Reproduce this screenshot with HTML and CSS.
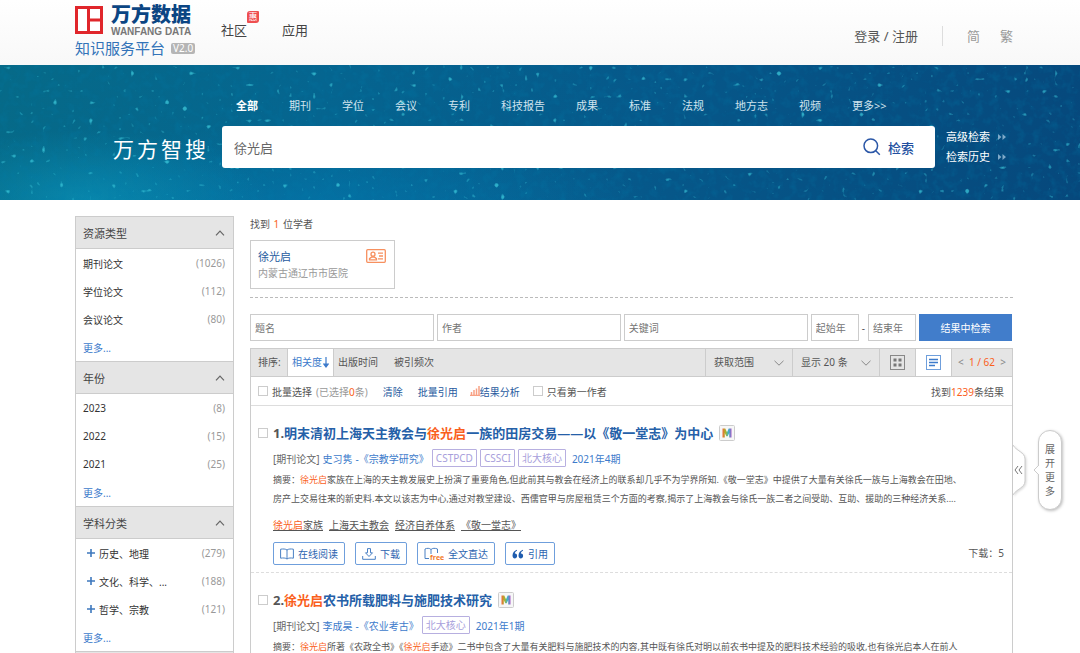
FILE: index.html
```html
<!DOCTYPE html>
<html lang="zh-CN">
<head>
<meta charset="utf-8">
<title>万方数据知识服务平台</title>
<link rel="stylesheet" href="styles.css">
</head>
<body>
<svg class="defs" aria-hidden="true">
  <defs>
    <symbol id="up" viewBox="0 0 10 6"><path d="M1 5.3 5 1.2 9 5.3" fill="none" stroke="#666" stroke-width="1.2"/></symbol>
    <symbol id="down" viewBox="0 0 10 6"><path d="M.5.8 5 5.2 9.500.8" fill="none" stroke="#888" stroke-width="1"/></symbol>
    <symbol id="ff" viewBox="0 0 8 6"><path d="M0 0 3.400 3 0 6zM4.500 0 8 3 4.500 6z" fill="#7ea9c8"/></symbol>
    <linearGradient id="rainbow" x1="0" y1="0" x2="1" y2="0"><stop offset="0" stop-color="#ef6a38"/><stop offset=".35" stop-color="#a8b62c"/><stop offset=".65" stop-color="#3bb5c9"/><stop offset="1" stop-color="#a35bc5"/></linearGradient>
    <symbol id="metrics" viewBox="0 0 16 16"><rect x=".5" y=".5" width="15" height="15" rx="1" fill="#f7f7f7" stroke="#ccc"/><path d="M3.500 12.500v-9h2.800L8 7.200l1.700-3.700h2.800v9h-2.300V8L8.700 11.200H7.300L5.800 8v4.500z" fill="url(#rainbow)"/></symbol>
  </defs>
</svg>
<div class="page">
  <header class="top">
    <a class="logo" href="#">
      <span class="logo-row">
        <svg class="logo-mark" viewBox="0 0 28 28"><path d="M1.500 1.500h25v25h-25z" fill="#fff" stroke="#e0262b" stroke-width="3"/><path d="M13.500 1.500v25M13.500 14h12" fill="none" stroke="#e0262b" stroke-width="3"/></svg>
        <span class="logo-text"><b class="logo-name">万方数据</b><span class="logo-en">WANFANG DATA</span></span>
      </span>
      <span class="logo-sub">知识服务平台<span class="version">V2.0</span></span>
    </a>
    <nav class="top-nav">
      <a href="#" class="community">社区<span class="badge">惠</span></a>
      <a href="#">应用</a>
    </nav>
    <div class="account"><a href="#">登录 / 注册</a><span class="bar"></span><a class="lang" href="#">简</a><a class="lang" href="#">繁</a></div>
  </header>

  <section class="banner">
    <svg class="specks" aria-hidden="true">
      <filter id="drops" x="0" y="0" width="100%" height="100%">
        <feTurbulence type="fractalNoise" baseFrequency="0.17" numOctaves="1" seed="8"/>
        <feColorMatrix values="0 0 0 0 0.05  0 0 0 0 0.62  0 0 0 0 0.74  9 0 0 0 -6.2"/>
        <feGaussianBlur stdDeviation="0.5"/>
      </filter>
      <filter id="grain" x="0" y="0" width="100%" height="100%">
        <feTurbulence type="fractalNoise" baseFrequency="0.12" numOctaves="3" seed="3"/>
        <feColorMatrix values="0 0 0 0 0  0 0 0 0 0.2  0 0 0 0 0.4  2 0 0 0 -0.9"/>
      </filter>
      <rect width="100%" height="100%" filter="url(#grain)" opacity=".3"/>
      <rect width="100%" height="100%" filter="url(#drops)" opacity=".7"/>
    </svg>
    <nav class="types">
      <a class="on" href="#">全部</a><a href="#">期刊</a><a href="#">学位</a><a href="#">会议</a><a href="#">专利</a><a href="#">科技报告</a><a href="#">成果</a><a href="#">标准</a><a href="#">法规</a><a href="#">地方志</a><a href="#">视频</a><a href="#">更多&gt;&gt;</a>
    </nav>
    <form class="search">
      <label class="brand" for="q">万方智搜</label>
      <div class="search-box">
        <input id="q" type="text" value="徐光启">
        <button type="button"><svg class="glass" viewBox="0 0 18 18"><circle cx="7.800" cy="7.800" r="6.800"/><path d="m12.800 12.800 4 4"/></svg>检索</button>
      </div>
      <div class="search-links">
        <a href="#">高级检索<svg class="ff"><use href="#ff"/></svg></a>
        <a href="#">检索历史<svg class="ff"><use href="#ff"/></svg></a>
      </div>
    </form>
  </section>

  <div class="body">
    <aside class="side">
      <section>
        <h2>资源类型<svg class="chev"><use href="#up"/></svg></h2>
        <ul>
          <li><a href="#">期刊论文</a><span>(1026)</span></li>
          <li><a href="#">学位论文</a><span>(112)</span></li>
          <li><a href="#">会议论文</a><span>(80)</span></li>
          <li><a class="more" href="#">更多...</a></li>
        </ul>
      </section>
      <section>
        <h2>年份<svg class="chev"><use href="#up"/></svg></h2>
        <ul>
          <li><a href="#">2023</a><span>(8)</span></li>
          <li><a href="#">2022</a><span>(15)</span></li>
          <li><a href="#">2021</a><span>(25)</span></li>
          <li><a class="more" href="#">更多...</a></li>
        </ul>
      </section>
      <section>
        <h2>学科分类<svg class="chev"><use href="#up"/></svg></h2>
        <ul>
          <li class="tree"><svg class="plus" viewBox="0 0 8 8"><path d="M4 0v8M0 4h8"/></svg><a href="#">历史、地理</a><span>(279)</span></li>
          <li class="tree"><svg class="plus" viewBox="0 0 8 8"><path d="M4 0v8M0 4h8"/></svg><a href="#">文化、科学、...</a><span>(188)</span></li>
          <li class="tree"><svg class="plus" viewBox="0 0 8 8"><path d="M4 0v8M0 4h8"/></svg><a href="#">哲学、宗教</a><span>(121)</span></li>
          <li><a class="more" href="#">更多...</a></li>
        </ul>
      </section>
      <section><h2></h2></section>
    </aside>

    <main class="main">
      <p class="found">找到 <em>1</em> 位学者</p>
      <article class="scholar">
        <div><a href="#">徐光启</a><p>内蒙古通辽市市医院</p></div>
        <svg class="idcard" viewBox="0 0 20 14"><rect x=".7" y=".7" width="18.600" height="12.600" rx="1"/><circle cx="7" cy="5.200" r="2"/><path d="M3.500 10.800V9.600L5.800 8h2.400l2.300 1.600v1.200zM12 4.200h5M13 7h4M12 9.800h5"/></svg>
      </article>

      <form class="refine">
        <input class="wide" type="text" placeholder="题名" aria-label="题名">
        <input class="wide" type="text" placeholder="作者" aria-label="作者">
        <input class="wide" type="text" placeholder="关键词" aria-label="关键词">
        <span class="years"><input type="text" placeholder="起始年" aria-label="起始年"><span>-</span><input type="text" placeholder="结束年" aria-label="结束年"></span>
        <button type="button">结果中检索</button>
      </form>

      <div class="results">
        <div class="toolbar">
          <span class="sort-label">排序:</span>
          <a class="sort on" href="#">相关度<svg class="arrow" viewBox="0 0 6 11"><path d="M3 0v9M.7 7 3 10l2.300-3z"/></svg></a>
          <a class="sort" href="#">出版时间</a>
          <a class="sort cite" href="#">被引频次</a>
          <span class="cell pick"><select aria-label="获取范围"><option>获取范围</option></select><svg class="chev"><use href="#down"/></svg></span>
          <span class="cell pick"><select aria-label="每页条数"><option>显示 20 条</option></select><svg class="chev"><use href="#down"/></svg></span>
          <button class="cell view" type="button" aria-label="网格"><svg viewBox="0 0 15 15"><rect x=".5" y=".5" width="14" height="14" fill="none" stroke="#888"/><path d="M3.500 3.500h3v3h-3zM8.500 3.500h3v3h-3zM3.500 8.500h3v3h-3zM8.500 8.500h3v3h-3z" fill="#777"/></svg></button>
          <button class="cell view on" type="button" aria-label="列表"><svg viewBox="0 0 15 15"><rect x=".5" y=".5" width="14" height="14" fill="none" stroke="#6f9fdc"/><path d="M3 4.500h9M3 7.500h9M3 10.500h6" fill="none" stroke="#3d7bcb" stroke-width="1.400"/></svg></button>
          <span class="cell pager"><a href="#">&lt;</a><em>1 / 62</em><a href="#">&gt;</a></span>
        </div>
        <div class="batch">
          <label><input type="checkbox">批量选择</label>
          <span class="picked">(已选择<em>0</em>条)</span>
          <a class="clear" href="#">清除</a>
          <a class="quote" href="#">批量引用</a>
          <a class="analyse" href="#"><svg class="chart" viewBox="0 0 10 10"><path d="M0 9.500h10M1.500 9V6M4 9V4M6.500 9V2.500M9 9V0" fill="none" stroke="#f8a184" stroke-width="1.500"/></svg>结果分析</a>
          <label><input type="checkbox">只看第一作者</label>
          <span class="total">找到<em>1239</em>条结果</span>
        </div>

        <article class="item">
          <input type="checkbox" aria-label="选择第1条">
          <div class="detail">
            <h3><span>1.</span><a href="#">明末清初上海天主教会与<em>徐光启</em>一族的田房交易——以《敬一堂志》为中心</a><svg class="metrics"><use href="#metrics"/></svg></h3>
            <p class="meta"><span>[期刊论文]</span><a href="#">史习隽</a><a href="#">-《宗教学研究》</a><span class="tag">CSTPCD</span><span class="tag">CSSCI</span><span class="tag">北大核心</span><a class="issue" href="#">2021年4期</a></p>
            <p class="abstract">摘要：<em>徐光启</em>家族在上海的天主教发展史上扮演了重要角色,但此前其与教会在经济上的联系却几乎不为学界所知.《敬一堂志》中提供了大量有关徐氏一族与上海教会在田地、<br>房产上交易往来的新史料.本文以该志为中心,通过对教堂建设、西儒官甲与房屋租赁三个方面的考察,揭示了上海教会与徐氏一族二者之间受助、互助、援助的三种经济关系....</p>
            <p class="keys"><a href="#"><em>徐光启</em>家族</a><a href="#">上海天主教会</a><a href="#">经济自养体系</a><a href="#">《敬一堂志》</a></p>
            <div class="actions">
              <button type="button"><svg class="i14" viewBox="0 0 14 12"><path d="M7 2C5.500.8 3 .8.6 1.200v9C3 9.800 5.500 9.800 7 11c1.500-1.200 4-1.200 6.400-.8v-9C11 .8 8.500.8 7 2v9"/></svg>在线阅读</button>
              <button type="button"><svg class="i14" viewBox="0 0 14 12"><path d="M5.500.6h3v4.200h2L7 8.500 3.500 4.800h2zM.7 8v3.300h12.600V8"/></svg>下载</button>
              <button type="button"><svg class="i20" viewBox="0 0 20 14"><path d="M5 11.500H1V2c2-1 4.500-1 6 .5C8.500 1 11 1 13.500 2v4M7 2.500V7"/><text x="6" y="13">free</text></svg>全文直达</button>
              <button type="button"><svg class="i12" viewBox="0 0 12 10"><path d="M5 .8C2 1.800.5 4 .5 6.500c0 4 4.600 3.500 4.600.5C5.100 5.200 4 4.400 2.800 4.600 3 3.200 3.800 2.300 5 1.800zM11 .8C8 1.800 6.500 4 6.500 6.500c0 4 4.600 3.500 4.600.5 0-1.800-1.100-2.600-2.300-2.400C9 3.200 9.800 2.300 11 1.800z" class="solid"/></svg>引用</button>
              <span class="count">下载：5</span>
            </div>
          </div>
        </article>

        <article class="item">
          <input type="checkbox" aria-label="选择第2条">
          <div class="detail">
            <h3><span>2.</span><a href="#"><em>徐光启</em>农书所载肥料与施肥技术研究</a><svg class="metrics"><use href="#metrics"/></svg></h3>
            <p class="meta"><span>[期刊论文]</span><a href="#">李成昊</a><a href="#">-《农业考古》</a><span class="tag">北大核心</span><a class="issue" href="#">2021年1期</a></p>
            <p class="abstract">摘要：<em>徐光启</em>所著《农政全书》《<em>徐光启</em>手迹》二书中包含了大量有关肥料与施肥技术的内容,其中既有徐氏对明以前农书中提及的肥料技术经验的吸收,也有徐光启本人在前人</p>
          </div>
        </article>
      </div>
    </main>
  </div>

  <div class="drawer">
    <svg class="flap" viewBox="0 0 14 50"><path d="M0 0C3 6 12 7 12 14v22c0 7-9 8-12 14" fill="#fff" stroke="#ccc"/><path d="m5 21-3 4 3 4M9 21l-3 4 3 4" fill="none" stroke="#777"/></svg>
    <button class="pill" type="button"><svg class="tip" viewBox="0 0 6 10"><path d="M6 0 1 5l5 5" fill="#fff" stroke="#ccc"/></svg>展开更多</button>
  </div>
</div>
</body>
</html>
```

FILE: styles.css
```css
* { box-sizing: border-box; }
body, h2, h3, p, ul { margin: 0; padding: 0; }
body {
  background: #fff;
  color: #555;
  font-family: "Noto Sans", "Noto Sans CJK SC", sans-serif;
  font-size: 10px;
}
a { color: inherit; text-decoration: none; }
ul { list-style: none; }
em { font-style: normal; color: #fa5f1c; }
input, button, select { font: inherit; color: inherit; }
button { cursor: pointer; padding: 0; }
svg { flex: none; }
.defs { position: absolute; width: 0; height: 0; }
.page { position: relative; height: 100vh; overflow: hidden; }

/* Header */
.top {
  display: flex;
  height: 65px;
  padding: 4px 67px 0 75px;
  background: linear-gradient(#fff, #f8f8f8);
  font-size: 13px;
}
.logo { width: 146px; }
.logo-row { display: flex; gap: 8px; height: 34px; }
.logo-mark { width: 28px; height: 28px; margin-top: 2px; }
.logo-text { display: flex; flex-direction: column; justify-content: space-between; }
.logo-name { color: #0b4583; font-family: "Noto Sans CJK SC", sans-serif; font-size: 20px; font-weight: 900; line-height: 20px; }
.logo-en { color: #777; font-family: "Liberation Sans", sans-serif; font-size: 10px; font-weight: bold; line-height: 12px; white-space: nowrap; }
.logo-sub { display: flex; align-items: center; gap: 6px; color: #3273b8; font-size: 15px; line-height: 20px; white-space: nowrap; }
.version { padding: 0 2px; border-radius: 2px; background: #b5b5b5; color: #fff; font-size: 10px; line-height: 11px; }
.top-nav { display: flex; gap: 35px; padding-top: 16px; line-height: 20px; color: #444; }
.community { position: relative; }
.badge {
  position: absolute; left: 26px; top: -9px;
  width: 12px; height: 12px;
  border-radius: 3px 1px;
  background: #ee4f50; color: #fff;
  font-size: 9px; line-height: 12px; text-align: center;
}
.account { display: flex; margin-left: auto; padding-top: 22px; line-height: 20px; color: #555; }
.bar { width: 1px; height: 20px; margin: 0 24px; background: #ddd; }
.lang { color: #999; }
.lang + .lang { margin-left: 20px; }

/* Search banner */
.banner {
  position: relative;
  height: 135px;
  padding: 31px 67px 0 75px;
  background:
    radial-gradient(ellipse 180px 70px at 8% 100%, rgba(10, 153, 190, .6), transparent),
    radial-gradient(ellipse 330px 90px at 30% 110%, rgba(4, 120, 175, .7), transparent),
    linear-gradient(100deg, #066a88 0%, #056590 30%, #06588a 60%, #06487c 100%);
}
.specks { position: absolute; inset: 0; width: 100%; height: 100%; }
.types { position: relative; display: flex; gap: 31px; margin-left: 161px; color: #cfe3ee; font-size: 11px; line-height: 20px; white-space: nowrap; }
.types .on { color: #fff; font-weight: bold; }
.search { position: relative; display: flex; align-items: center; margin-top: 10px; }
.brand { width: 147px; padding: 4px 0 0 38px; color: #fff; font-size: 21px; letter-spacing: 3px; line-height: 38px; white-space: nowrap; }
.search-box { display: flex; flex: 1; height: 42px; border-radius: 3px; background: #fff; font-size: 13px; }
.search-box input { flex: 1; min-width: 0; padding: 0 12px; border: 0; background: none; color: #666; }
.search-box button { display: flex; align-items: center; gap: 7px; padding: 0 21px; border: 0; background: none; color: #2350a0; font-weight: 500; }
.glass { width: 18px; height: 18px; fill: none; stroke: #2b57a7; stroke-width: 1.5; }
.search-links { width: 78px; padding-left: 11px; color: #fff; font-size: 11px; line-height: 20px; }
.search-links a { display: flex; align-items: center; gap: 8px; white-space: nowrap; }
.ff { width: 8px; height: 6px; }

/* Body columns */
.body { display: flex; align-items: flex-start; gap: 16px; padding: 16px 67px 0 75px; }
.side { width: 159px; border: 1px solid #ccc; border-width: 0 1px; }
.side h2 {
  display: flex; align-items: center; justify-content: space-between;
  height: 33px; padding: 0 8px 0 7px;
  border: 1px solid #ccc; border-width: 1px 0;
  background: #e5e5e5; color: #444;
  font-size: 11px; font-weight: normal;
}
.chev { width: 10px; height: 6px; }
.side li { display: flex; align-items: center; height: 28px; padding: 0 8px 0 7px; color: #333; }
.side li span { margin-left: auto; color: #999; }
.side .tree { padding-left: 11px; }
.plus { width: 8px; height: 8px; margin-right: 4px; stroke: #3e78bd; stroke-width: 1.6; }
.side .more { color: #3d7bcb; }
.main { flex: 1; min-width: 0; }
.found { line-height: 16px; }
.found em { margin: 0 1px; }
.scholar {
  display: flex; justify-content: space-between;
  width: 145px; height: 49px; margin-top: 8px; padding: 8px 8px 0 7px;
  border: 1px solid #ccc;
  line-height: 16px;
}
.scholar a { color: #265a9e; font-size: 11px; }
.scholar p { color: #999; white-space: nowrap; }
.idcard { width: 20px; height: 14px; fill: none; stroke: #f7905f; stroke-width: 1.3; }

/* Refine form */
.refine { display: flex; gap: 3px; margin-top: 8px; padding: 16px 1px 0 0; border-top: 1px dashed #bbb; }
.refine input { width: 48px; height: 27px; padding: 0 4px; border: 1px solid #ccc; background: #fff; }
.refine .wide { flex: 1; min-width: 0; }
.refine input::placeholder { color: #757575; opacity: 1; }
.years { display: flex; align-items: center; gap: 3px; }
.refine button { width: 93px; height: 27px; border: 0; background: #417dcb; color: #fff; }

/* Results */
.results { margin-top: 7px; border: 1px solid #ccc; }
.toolbar { display: flex; align-items: stretch; height: 28px; border-bottom: 1px solid #ccc; background: #e5e5e5; line-height: 27px; white-space: nowrap; }
.sort-label { width: 36px; padding-left: 7px; }
.sort { padding: 0 4px; }
.sort.on { display: flex; align-items: center; gap: 1px; border: 1px solid #ccc; border-width: 0 1px; background: #fff; color: #3d7bcb; }
.arrow { width: 6px; height: 11px; fill: #3d7bcb; stroke: #3d7bcb; stroke-width: 1.2; }
.cite { margin-right: auto; margin-left: 8px; }
.cell { display: flex; align-items: center; border: 0; border-left: 1px solid #ccc; background: none; }
.pick { width: 87px; padding-right: 8px; }
.pick select { flex: 1; min-width: 0; padding: 0 0 0 8px; border: 0; appearance: none; background: none; }
.view { justify-content: center; width: 36px; }
.view svg { width: 15px; height: 15px; }
.view.on { background: #fff; }
.pager { justify-content: space-between; width: 61px; padding: 0 6px; color: #888; }
.batch { display: flex; align-items: center; height: 29px; padding: 0 8px 0 7px; border-bottom: 1px solid #ddd; white-space: nowrap; }
.batch label { display: flex; align-items: center; gap: 4px; }
input[type="checkbox"] { flex: none; appearance: none; width: 10px; height: 10px; margin: 0; border: 1px solid #ccc; background: #fff; }
.picked { margin-left: 4px; color: #999; }
.batch a { color: #265a9e; }
.clear { margin-left: 15px; }
.quote { margin-left: 15px; }
.analyse { display: flex; align-items: center; margin: 0 13px 0 12px; }
.chart { width: 10px; height: 10px; }
.total { margin-left: auto; }
.item { display: flex; gap: 5px; padding: 17px 8px 7px 7px; }
.item + .item { border-top: 1px dashed #ddd; }
.item > input { margin-top: 5px; }
.detail { flex: 1; min-width: 0; }
.item h3 { display: flex; align-items: center; font-size: 13px; line-height: 20px; white-space: nowrap; }
.item h3 a { color: #2560a8; }
.metrics { width: 16px; height: 16px; margin-left: 6px; }
.meta { display: flex; align-items: center; gap: 3px; height: 20px; margin-top: 5px; color: #666; white-space: nowrap; }
.meta a { color: #3d7bcb; }
.tag { padding: 0 3px; border: 1px solid #b7afe0; border-radius: 1px; color: #a79edb; line-height: 16px; }
.meta .issue { margin-left: 3px; }
.abstract { margin-top: 2px; font-size: 9px; line-height: 19px; color: #555; white-space: nowrap; }
.keys { display: flex; gap: 6px; margin-top: 7px; line-height: 20px; }
.keys a { text-decoration: underline; }
.actions { display: flex; gap: 10px; margin-top: 7px; }
.actions button { display: flex; align-items: center; justify-content: center; gap: 4px; height: 23px; padding: 0 6px; border: 1px solid #6f9fdc; border-radius: 2px; background: #fff; color: #2c64b0; white-space: nowrap; }
.actions svg { fill: none; stroke: #4a80c4; stroke-width: 1; }
.actions text { fill: #f37a2c; stroke: none; font-family: "Open Sans", sans-serif; font-size: 7px; font-weight: bold; }
.actions .solid { fill: #1f5cae; stroke: none; }
.i14 { width: 14px; height: 12px; }
.i20 { width: 20px; height: 14px; }
.i12 { width: 12px; height: 10px; }
.count { margin-left: auto; line-height: 23px; }

/* Floating drawer handle */
.drawer { position: absolute; top: 430px; right: 18px; display: flex; align-items: center; gap: 11px; }
.flap { width: 14px; height: 50px; filter: drop-shadow(1px 1px 1px rgba(0, 0, 0, .15)); }
.pill {
  position: relative;
  width: 24px; height: 80px; padding: 0 6px;
  border: 1px solid #ccc; border-radius: 12px;
  background: #fff; box-shadow: 1px 1px 3px rgba(0, 0, 0, .25);
  color: #666; line-height: 14px;
}
.tip { position: absolute; left: -6px; top: 34px; width: 6px; height: 10px; }
```
